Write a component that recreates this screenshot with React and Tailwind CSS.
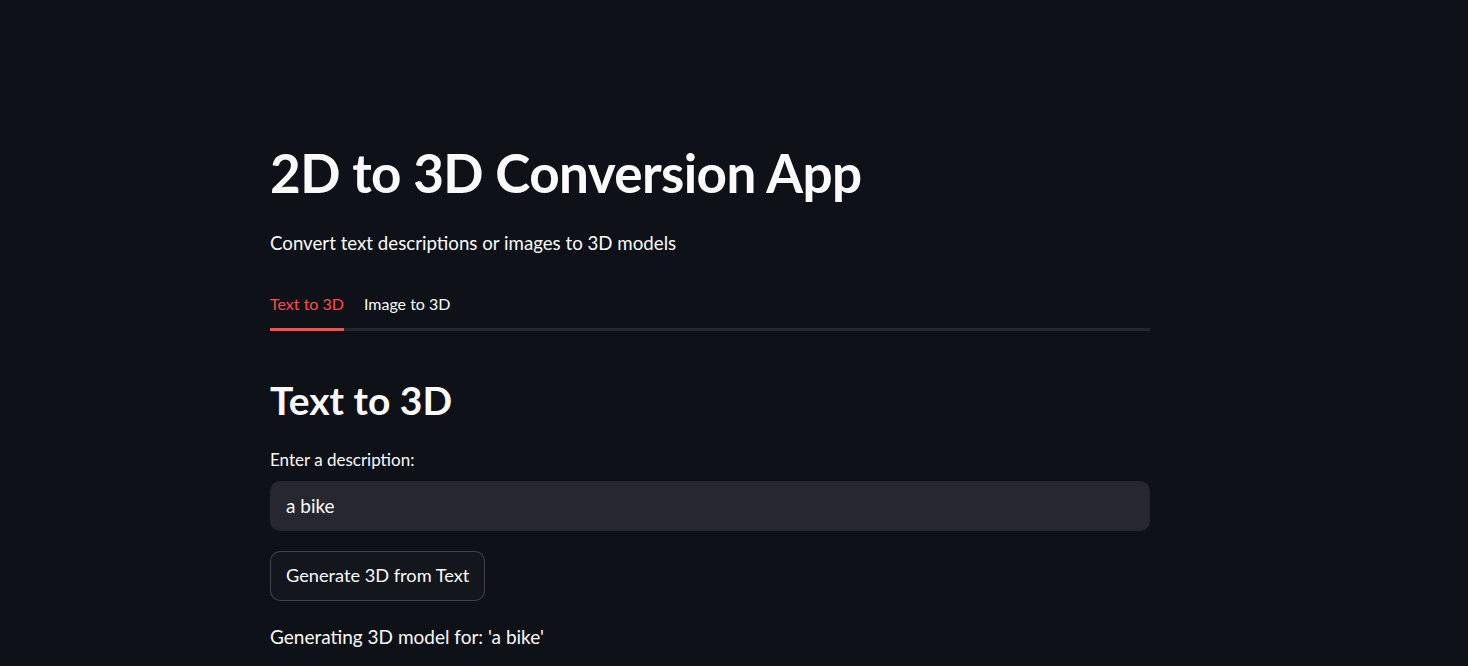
import React from 'react';

const font = { fontFamily: '"Source Sans Pro", Lato, "Noto Sans", sans-serif' };

export default function App() {
  return (
    <div className="min-h-[666px] w-full overflow-hidden bg-[#0e1117] text-[#fafafa]" style={font}>
      <div className="ml-[270px] w-[880px] pt-[144px]">
        <h1 className="text-[53px] font-bold leading-[58px] tracking-[-0.6px]">2D to 3D Conversion App</h1>

        <p className="mt-[28px] text-[18.7px] leading-[26px]">Convert text descriptions or images to 3D models</p>

        <div className="relative mt-[36px] text-[16px] leading-[24px]">
          <div className="relative z-10 flex gap-5">
            <div className="flex flex-col">
              <span className="text-[#ff4b4b]">Text to 3D</span>
              <span className="mt-[12px] h-[3px] w-full bg-[#ff4b4b]" />
            </div>
            <div className="flex flex-col">
              <span className="text-[#fafafa]">Image to 3D</span>
            </div>
          </div>
          <span className="absolute bottom-0 left-0 h-[3px] w-full bg-[#262730]" />
        </div>

        <h2 className="mt-[43px] text-[39px] font-bold leading-[52px]">Text to 3D</h2>

        <label className="mt-[23px] block text-[17px] leading-[22px]">Enter a description:</label>

        <div className="mt-[10px] flex h-[50px] w-full items-center rounded-[10px] bg-[#262730] px-4 text-[19px]">
          a bike
        </div>

        <button className="mt-[20px] flex h-[50px] items-center rounded-[10px] border border-[rgba(250,250,250,0.2)] bg-[#13161d] px-[15px] text-[18.2px] text-[#fafafa]">
          Generate 3D from Text
        </button>

        <p className="mt-[23px] text-[19px] leading-[26px]">Generating 3D model for: 'a bike'</p>
      </div>
    </div>
  );
}
